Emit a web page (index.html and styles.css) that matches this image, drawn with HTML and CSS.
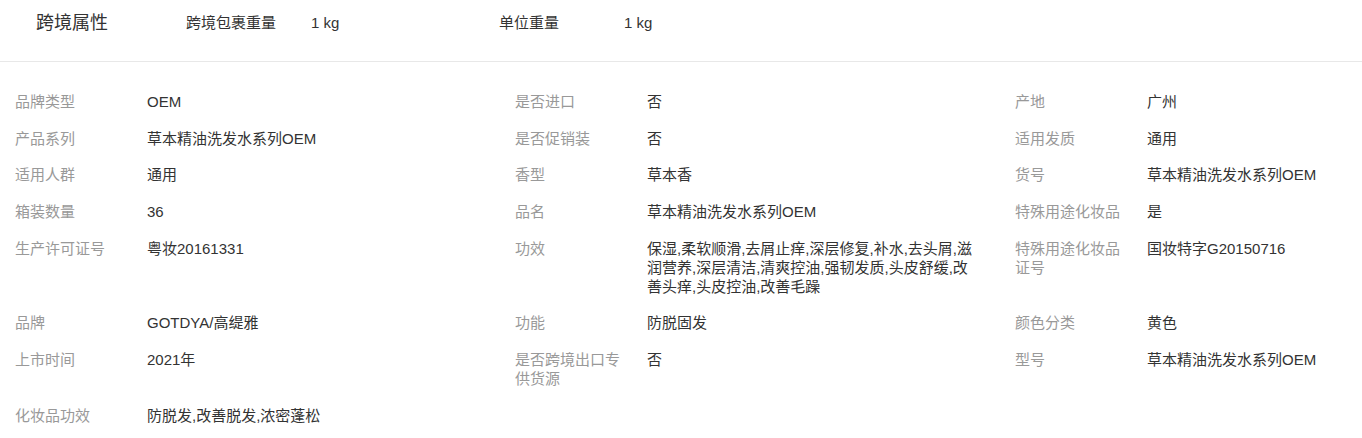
FILE: index.html
```html
<!DOCTYPE html>
<html>
<head>
    <meta charset="UTF-8">
    <title>商品属性</title>
    <link rel="stylesheet" href="styles.css">
</head>
<body>
    <div class="cross-border">
        <div class="cross-title">跨境属性</div>
        <div class="cross-item">
            <span class="cross-label">跨境包裹重量</span>
            <span class="cross-value">1 kg</span>
        </div>
        <div class="cross-item">
            <span class="cross-label">单位重量</span>
            <span class="cross-value">1 kg</span>
        </div>
    </div>

    <div class="attr-list">
        <div class="attr-item"><div class="attr-label">品牌类型</div><div class="attr-value">OEM</div></div>
        <div class="attr-item"><div class="attr-label">是否进口</div><div class="attr-value">否</div></div>
        <div class="attr-item"><div class="attr-label">产地</div><div class="attr-value">广州</div></div>

        <div class="attr-item"><div class="attr-label">产品系列</div><div class="attr-value">草本精油洗发水系列OEM</div></div>
        <div class="attr-item"><div class="attr-label">是否促销装</div><div class="attr-value">否</div></div>
        <div class="attr-item"><div class="attr-label">适用发质</div><div class="attr-value">通用</div></div>

        <div class="attr-item"><div class="attr-label">适用人群</div><div class="attr-value">通用</div></div>
        <div class="attr-item"><div class="attr-label">香型</div><div class="attr-value">草本香</div></div>
        <div class="attr-item"><div class="attr-label">货号</div><div class="attr-value">草本精油洗发水系列OEM</div></div>

        <div class="attr-item"><div class="attr-label">箱装数量</div><div class="attr-value">36</div></div>
        <div class="attr-item"><div class="attr-label">品名</div><div class="attr-value">草本精油洗发水系列OEM</div></div>
        <div class="attr-item"><div class="attr-label">特殊用途化妆品</div><div class="attr-value">是</div></div>

        <div class="attr-item"><div class="attr-label">生产许可证号</div><div class="attr-value">粤妆20161331</div></div>
        <div class="attr-item"><div class="attr-label">功效</div><div class="attr-value">保湿,柔软顺滑,去屑止痒,深层修复,补水,去头屑,滋润营养,深层清洁,清爽控油,强韧发质,头皮舒缓,改善头痒,头皮控油,改善毛躁</div></div>
        <div class="attr-item"><div class="attr-label">特殊用途化妆品证号</div><div class="attr-value">国妆特字G20150716</div></div>

        <div class="attr-item"><div class="attr-label">品牌</div><div class="attr-value">GOTDYA/高缇雅</div></div>
        <div class="attr-item"><div class="attr-label">功能</div><div class="attr-value">防脱固发</div></div>
        <div class="attr-item"><div class="attr-label">颜色分类</div><div class="attr-value">黄色</div></div>

        <div class="attr-item"><div class="attr-label">上市时间</div><div class="attr-value">2021年</div></div>
        <div class="attr-item"><div class="attr-label">是否跨境出口专供货源</div><div class="attr-value">否</div></div>
        <div class="attr-item"><div class="attr-label">型号</div><div class="attr-value">草本精油洗发水系列OEM</div></div>

        <div class="attr-item"><div class="attr-label">化妆品功效</div><div class="attr-value">防脱发,改善脱发,浓密蓬松</div></div>
    </div>
</body>
</html>
```

FILE: styles.css
```css
body {
    margin: 0;
    background: #fff;
    color: #333;
    font-family: "Liberation Sans", "Noto Sans CJK SC", sans-serif;
    font-size: 15px;
}

/* cross-border block on top */
.cross-border {
    display: flex;
    align-items: center;
    padding: 13px 0 28px 36px;
    line-height: 20px;
    border-bottom: 1px solid #e8e8e8;
}

.cross-title {
    width: 150px;
    font-size: 18px;
}

.cross-item {
    display: flex;
    width: 313px;
}

.cross-label {
    width: 125px;
}

/* attribute grid */
.attr-list {
    display: grid;
    grid-template-columns: 500px 500px minmax(0, 1fr);
    row-gap: 17.7px;
    padding: 30px 0 0 15px;
    line-height: 19px;
}

.attr-item {
    display: flex;
    align-items: flex-start;
    min-width: 0;
}

.attr-label {
    flex: none;
    width: 112px;
    margin-right: 20px;
    color: #999;
}

.attr-value {
    flex: 0 1 330px;
    min-width: 0;
    color: #333;
}
```
